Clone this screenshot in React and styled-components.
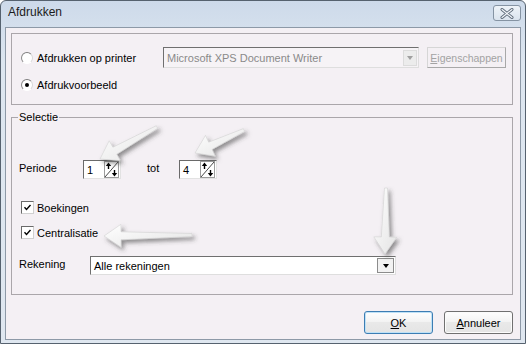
import React from 'react';
import styled, { createGlobalStyle } from 'styled-components';

const Global = createGlobalStyle`
  html, body { margin: 0; padding: 0; background: #fff; }
  body {
    font-family: "Liberation Sans", Arial, sans-serif;
    font-size: 11px;
    color: #000;
  }
`;

const Window = styled.div`
  position: relative;
  box-sizing: border-box;
  width: 526px;
  height: 344px;
  border: 1px solid #56626f;
  border-radius: 6px 6px 0 0;
  background: linear-gradient(#cddaea, #dde6f0 60px, #dfe7f0);
  padding: 0 4px 3px 4px;
  display: flex;
  flex-direction: column;
`;

const TitleBar = styled.div`
  height: 26px;
  box-sizing: border-box;
  display: flex;
  align-items: flex-start;
  justify-content: space-between;
  padding: 4px 0 0 3px;
  font-size: 12px;
  color: #1b1b1b;
`;

const TitleText = styled.span`
  line-height: 15px;
`;

const CloseButton = styled.div`
  box-sizing: border-box;
  width: 28px;
  height: 16px;
  border: 1px solid #8593a3;
  border-radius: 3px;
  background: linear-gradient(#eef3f8, #dbe4ee);
  display: flex;
  align-items: center;
  justify-content: center;
`;

const Client = styled.div`
  flex: 1;
  border: 1px solid #8d99a7;
  background: #f4f0f4;
  padding: 5px 7px 0 5px;
  display: flex;
  flex-direction: column;
`;

const Group = styled.div`
  position: relative;
  box-sizing: border-box;
  height: ${p => p.$h}px;
  margin-top: ${p => p.$mt || 0}px;
  border: 1px solid #aaa6aa;
  padding: ${p => p.$pad};
  display: flex;
  flex-direction: column;
`;

const Legend = styled.span`
  position: absolute;
  top: -7px;
  left: 6px;
  padding: 0 1px;
  background: #f4f0f4;
  line-height: 13px;
`;

const Row = styled.div`
  display: flex;
  align-items: center;
  height: ${p => p.$h || 21}px;
  margin-top: ${p => p.$mt || 0}px;
`;

const OptionCell = styled.label`
  display: flex;
  align-items: center;
  width: ${p => p.$w}px;
  gap: 4px;
`;

const Radio = styled.span`
  box-sizing: border-box;
  width: 12px;
  height: 12px;
  border-radius: 50%;
  border: 1px solid;
  border-color: #7d7d7d #d8d8d8 #ffffff #8a8a8a;
  background: #fff;
  display: flex;
  align-items: center;
  justify-content: center;
  &::after {
    content: '';
    display: ${p => (p.$on ? 'block' : 'none')};
    width: 4px;
    height: 4px;
    border-radius: 50%;
    background: #000;
  }
`;

const Combo = styled.div`
  box-sizing: border-box;
  width: ${p => p.$w}px;
  height: ${p => p.$h}px;
  border: 1px solid;
  border-color: #6f6f6f #dedede #dedede #6f6f6f;
  background: ${p => (p.$disabled ? '#f6f3f6' : '#fff')};
  color: ${p => (p.$disabled ? '#8a8a8a' : '#000')};
  display: flex;
  align-items: center;
  justify-content: space-between;
  padding: 0 1px 0 3px;
`;

const DropButton = styled.span`
  box-sizing: border-box;
  width: ${p => (p.$disabled ? 14 : 17)}px;
  height: ${p => (p.$disabled ? 16 : 15)}px;
  border: 1px solid ${p => (p.$disabled ? '#dcdcdc' : '#8c8c8c')};
  background: ${p => (p.$disabled ? '#ececec' : '#f2f2f2')};
  display: flex;
  align-items: center;
  justify-content: center;
  &::after {
    content: '';
    border-left: 3.5px solid transparent;
    border-right: 3.5px solid transparent;
    border-top: 4px solid ${p => (p.$disabled ? '#a0a0a0' : '#000')};
  }
`;

const FlatButton = styled.div`
  box-sizing: border-box;
  width: 79px;
  height: 21px;
  margin-left: 8px;
  border: 1px solid;
  border-color: #d6d6d6 #a8a8a8 #a8a8a8 #d6d6d6;
  color: #a3a3a3;
  display: flex;
  align-items: center;
  justify-content: center;
  font-size: 10.5px;
`;

const FieldLabel = styled.span`
  width: ${p => p.$w}px;
  margin-left: ${p => p.$ml || 0}px;
  margin-top: ${p => p.$up ? -3 : 0}px;
`;

const SpinBox = styled.div`
  box-sizing: border-box;
  width: 38px;
  height: 19px;
  border: 1px solid;
  border-color: #6a6a6a #e2e2e2 #e2e2e2 #6a6a6a;
  background: #fff;
  display: flex;
  align-items: center;
  justify-content: space-between;
  padding: 0 1px 0 3px;
`;

const CheckRow = styled.label`
  display: flex;
  align-items: center;
  gap: 3px;
  height: 13px;
  margin-top: ${p => p.$mt}px;
  margin-left: 2px;
`;

const CheckBox = styled.span`
  box-sizing: border-box;
  width: 13px;
  height: 13px;
  border: 1px solid;
  border-color: #6a6a6a #d0d0d0 #d0d0d0 #6a6a6a;
  background: #fff;
  display: flex;
  align-items: center;
  justify-content: center;
`;

const ButtonBar = styled.div`
  display: flex;
  justify-content: flex-end;
  gap: 11px;
  margin-top: 16px;
`;

const PushButton = styled.div`
  box-sizing: border-box;
  width: 69px;
  height: 23px;
  border-radius: 3px;
  border: 1px solid ${p => (p.$default ? '#3c7db3' : '#707070')};
  background: linear-gradient(#fefefe, #f2f2f2 50%, #e9e9e9 50%, #e4e4e4);
  box-shadow: inset 0 0 0 1px ${p => (p.$default ? '#bfe1f6' : '#fbfbfb')};
  display: flex;
  align-items: center;
  justify-content: center;
  font-size: 11px;
`;

const Overlay = styled.svg`
  position: absolute;
  top: -1px;
  left: -1px;
  pointer-events: none;
`;

const arrowPoints = (x1, y1, x2, y2, head = 17, headW = 23, w0 = 3, w1 = 8) => {
  const dx = x2 - x1;
  const dy = y2 - y1;
  const len = Math.hypot(dx, dy);
  const ux = dx / len;
  const uy = dy / len;
  const nx = -uy;
  const ny = ux;
  const bx = x2 - ux * head;
  const by = y2 - uy * head;
  return [
    [x1 + (nx * w0) / 2, y1 + (ny * w0) / 2],
    [bx + (nx * w1) / 2, by + (ny * w1) / 2],
    [bx + (nx * headW) / 2, by + (ny * headW) / 2],
    [x2, y2],
    [bx - (nx * headW) / 2, by - (ny * headW) / 2],
    [bx - (nx * w1) / 2, by - (ny * w1) / 2],
    [x1 - (nx * w0) / 2, y1 - (ny * w0) / 2],
  ]
    .map(p => p.map(v => v.toFixed(1)).join(','))
    .join(' ');
};

const arrows = [
  [157, 127, 100, 159],
  [244, 130, 195, 153],
  [192, 235, 104, 236],
  [386, 188, 385, 254],
];

const SpinIcon = () => (
  <svg width="15" height="17" viewBox="0 0 15 17">
    <rect x="0.5" y="0.5" width="14" height="16" fill="#fff" stroke="#9c9c9c" />
    <line x1="1" y1="16" x2="14" y2="1" stroke="#4a4a4a" />
    <line x1="4.5" y1="8" x2="4.5" y2="3.5" stroke="#000" strokeWidth="1.4" />
    <polygon points="1.8,5 4.5,1.6 7.2,5" fill="#000" />
    <line x1="10.5" y1="9" x2="10.5" y2="13.5" stroke="#000" strokeWidth="1.4" />
    <polygon points="7.8,12 10.5,15.4 13.2,12" fill="#000" />
  </svg>
);

const Check = () => (
  <svg width="9" height="9" viewBox="0 0 9 9">
    <path d="M1.5 4.3 L3.5 6.4 L7.5 2" fill="none" stroke="#000" strokeWidth="1.4" />
  </svg>
);

const CloseGlyph = () => (
  <svg width="14" height="11" viewBox="0 0 14 11">
    <path d="M2 1.5 L12 9.5 M12 1.5 L2 9.5" stroke="#5e6b7a" strokeWidth="3" strokeLinecap="round" />
    <path d="M2 1.5 L12 9.5 M12 1.5 L2 9.5" stroke="#f4f7fb" strokeWidth="1.2" strokeLinecap="round" />
  </svg>
);

const Spinner = ({ value }) => (
  <SpinBox>
    <span>{value}</span>
    <SpinIcon />
  </SpinBox>
);

export default function App() {
  return (
    <>
      <Global />
      <Window>
        <TitleBar>
          <TitleText>Afdrukken</TitleText>
          <CloseButton>
            <CloseGlyph />
          </CloseButton>
        </TitleBar>
        <Client>
          <Group $h={72} $pad="13px 0 0 9px">
            <Row>
              <OptionCell $w={142}>
                <Radio />
                Afdrukken op printer
              </OptionCell>
              <Combo $w={256} $h={21} $disabled>
                <span>Microsoft XPS Document Writer</span>
                <DropButton $disabled />
              </Combo>
              <FlatButton>
                <span><u>E</u>igenschappen</span>
              </FlatButton>
            </Row>
            <Row $mt={6}>
              <OptionCell $w={142}>
                <Radio $on />
                Afdrukvoorbeeld
              </OptionCell>
            </Row>
          </Group>
          <Group $h={178} $mt={12} $pad="42px 0 0 7px">
            <Legend>Selectie</Legend>
            <Row $h={19}>
              <FieldLabel $w={64} $up>Periode</FieldLabel>
              <Spinner value="1" />
              <FieldLabel $w={32} $ml={26} $up>tot</FieldLabel>
              <Spinner value="4" />
            </Row>
            <CheckRow $mt={22}>
              <CheckBox><Check /></CheckBox>
              Boekingen
            </CheckRow>
            <CheckRow $mt={12}>
              <CheckBox><Check /></CheckBox>
              Centralisatie
            </CheckRow>
            <Row $h={19} $mt={17}>
              <FieldLabel $w={71} $up>Rekening</FieldLabel>
              <Combo $w={306} $h={19}>
                <span>Alle rekeningen</span>
                <DropButton />
              </Combo>
            </Row>
          </Group>
          <ButtonBar>
            <PushButton $default><span><u>O</u>K</span></PushButton>
            <PushButton><span><u>A</u>nnuleer</span></PushButton>
          </ButtonBar>
        </Client>
        <Overlay width="526" height="344" viewBox="0 0 526 344">
          <defs>
            <linearGradient id="arrowFill" x1="0" y1="0" x2="1" y2="1">
              <stop offset="0" stopColor="#ffffff" />
              <stop offset="1" stopColor="#e4e4e4" />
            </linearGradient>
            <filter id="arrowShadow" x="-30%" y="-30%" width="160%" height="160%">
              <feDropShadow dx="2.5" dy="3" stdDeviation="2" floodColor="#3a3a3a" floodOpacity="0.55" />
            </filter>
          </defs>
          {arrows.map(([x1, y1, x2, y2], i) => (
            <polygon
              key={i}
              points={arrowPoints(x1, y1, x2, y2)}
              fill="url(#arrowFill)"
              stroke="#d2d2d2"
              strokeWidth="0.6"
              filter="url(#arrowShadow)"
            />
          ))}
        </Overlay>
      </Window>
    </>
  );
}
